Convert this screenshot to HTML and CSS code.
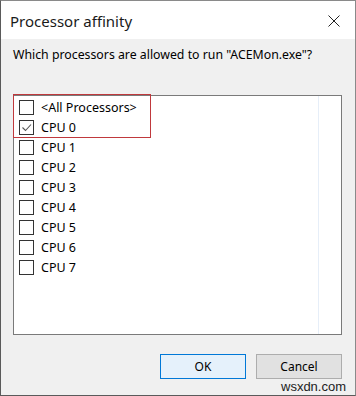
FILE: index.html
```html
<!DOCTYPE html>
<html>
<head>
<meta charset="utf-8">
<link rel="stylesheet" href="styles.css">
</head>
<body>
<div class="window">
  <div class="titlebar">
    <span class="title">Processor affinity</span>
    <svg class="close" width="12" height="12" viewBox="0 0 12 12"><path d="M0.5 0.5 L11.5 11.5 M11.5 0.5 L0.5 11.5" stroke="#222" stroke-width="1" fill="none"/></svg>
  </div>
  <div class="content">
    <div class="message">Which processors are allowed to run "ACEMon.exe"?</div>
    <div class="listbox">
      <div class="column">
        <div class="row"><span class="box"></span><span class="label">&lt;All Processors&gt;</span></div>
        <div class="row"><span class="box"><svg width="13" height="13" viewBox="0 0 13 13"><path d="M2.5 6.5 L5.5 9.5 L11 3.5" stroke="#555" stroke-width="1.1" fill="none"/></svg></span><span class="label">CPU 0</span></div>
        <div class="row"><span class="box"></span><span class="label">CPU 1</span></div>
        <div class="row"><span class="box"></span><span class="label">CPU 2</span></div>
        <div class="row"><span class="box"></span><span class="label">CPU 3</span></div>
        <div class="row"><span class="box"></span><span class="label">CPU 4</span></div>
        <div class="row"><span class="box"></span><span class="label">CPU 5</span></div>
        <div class="row"><span class="box"></span><span class="label">CPU 6</span></div>
        <div class="row"><span class="box"></span><span class="label">CPU 7</span></div>
      </div>
    </div>
    <div class="buttons">
      <button class="btn btn-default">OK</button>
      <button class="btn">Cancel</button>
    </div>
  </div>
  <div class="highlight"></div>
  <div class="watermark">wsxdn.com</div>
</div>
</body>
</html>
```
FILE: styles.css
```css
html, body {
  margin: 0;
  padding: 0;
  background: #f0f0f0;
}
.window {
  position: relative;
  width: 356px;
  height: 396px;
  box-sizing: border-box;
  border: 1px solid #8a8a8a;
  border-left-color: #5a5a5a;
  border-bottom-color: #5a5a5a;
  background: #f0f0f0;
  display: flex;
  flex-direction: column;
  font-family: "Noto Sans", "Open Sans", sans-serif;
  color: #000;
}
.titlebar {
  height: 38px;
  background: #fff;
  display: flex;
  align-items: center;
  justify-content: space-between;
  padding: 0 15px 0 9px;
}
.title {
  font-size: 15px;
  color: #1a1a1a;
  margin-top: 1px;
}
.close {
  display: block;
  margin-top: 2px;
}
.content {
  flex: 1;
  display: flex;
  flex-direction: column;
  padding: 0 13px 0 12px;
}
.message {
  font-size: 12.3px;
  line-height: 16px;
  margin-top: 8px;
  height: 16px;
  white-space: nowrap;
}
.listbox {
  margin-top: 32px;
  height: 240px;
  box-sizing: border-box;
  border: 1px solid #7a7a7a;
  background: #fff;
  display: flex;
}
.column {
  width: 304px;
  border-right: 1px solid #e6eef8;
  padding-top: 1px;
}
.row {
  height: 20px;
  display: flex;
  align-items: center;
  padding-left: 5px;
}
.box {
  width: 15px;
  height: 15px;
  box-sizing: border-box;
  border: 1px solid #333;
  background: #fff;
  display: flex;
  align-items: center;
  justify-content: center;
}
.box svg {
  display: block;
}
.label {
  font-size: 12.5px;
  margin-left: 7px;
  margin-top: 1px;
}
.buttons {
  display: flex;
  justify-content: flex-end;
  gap: 10px;
  margin-top: 19px;
}
.btn {
  width: 86px;
  height: 25px;
  box-sizing: border-box;
  border: 1px solid #adadad;
  background: #e1e1e1;
  font-family: "Noto Sans", "Open Sans", sans-serif;
  font-size: 12px;
  color: #000;
  padding: 0;
}
.btn-default {
  border-color: #0078d7;
  background: #e5f1fb;
}
.highlight {
  position: absolute;
  left: 12px;
  top: 93px;
  width: 138px;
  height: 44px;
  box-sizing: border-box;
  border: 1px solid #c0393d;
}
.watermark {
  position: absolute;
  left: 280px;
  top: 378px;
  font-family: "Liberation Sans", sans-serif;
  font-size: 13px;
  color: #222;
}
```
